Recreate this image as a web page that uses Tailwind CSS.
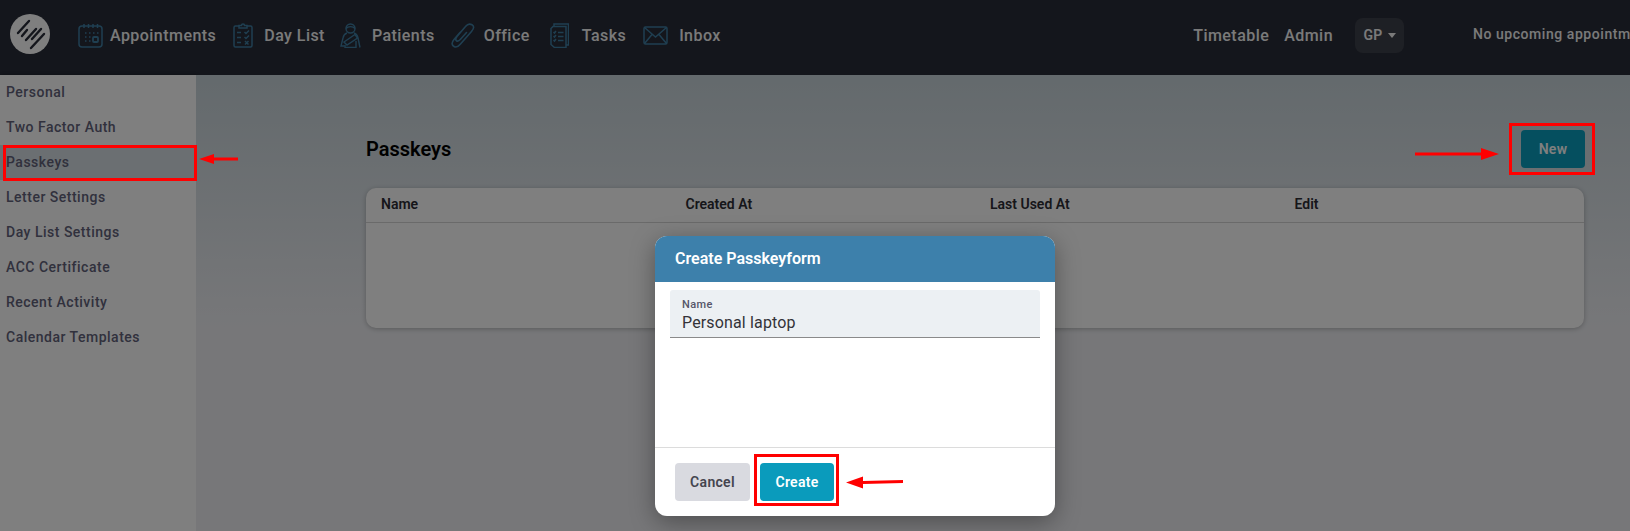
<!DOCTYPE html>
<html lang="en">
  <head>
    <meta charset="UTF-8" />
    <title>Passkeys</title>
    <script src="https://cdn.jsdelivr.net/npm/@tailwindcss/browser@4"></script>
  </head>
  <body class="bg-[#eeeff3]">
    <div class="relative w-[1630px] h-[531px] overflow-hidden font-['Roboto',sans-serif]">
      <!-- top nav -->
      <header class="h-[75px] pb-[4px] bg-[#282c38] flex items-center text-[#f5f5f5] text-[16px] font-medium tracking-[0.45px]">
        <div class="w-[40px] h-[40px] ml-[10px] -mt-[3px] rounded-full bg-white flex items-center justify-center">
          <svg width="32" height="32" viewBox="0 0 32 32" fill="none" stroke="#282c38" stroke-width="2.4" stroke-linecap="round">
            <path d="M4 15 L15 3" />
            <path d="M8 18 L13 12" />
            <path d="M12 22 L22 11" />
            <path d="M18 21 L27 11" />
            <path d="M17 30 L30 16" />
          </svg>
        </div>
        <nav class="flex items-center ml-[28px]">
          <svg class="w-[25px] h-[25px]" viewBox="0 0 25 25" fill="none" stroke="#3f7ea3" stroke-width="1.5">
            <rect x="1" y="3" width="23" height="21" rx="3" />
            <path d="M6 1v4M10.5 1v4M15 1v4M19.5 1v4" />
            <path d="M7 10h1.5M11 10h1.5M15 10h1.5M19 10h1.5M7 14h1.5M11 14h1.5M7 18h1.5M11 18h1.5" stroke-width="1.6" />
            <rect x="15" y="14" width="5" height="5" rx="1" stroke-width="1.8" />
          </svg>
          <span class="ml-[7px]">Appointments</span>
          <svg class="w-[20px] h-[25px] ml-[17px]" viewBox="0 0 20 25" fill="none" stroke="#3f7ea3" stroke-width="1.5">
            <path d="M6 3H2.500A1.500 1.500 0 0 0 1 4.500V22.500A1.500 1.500 0 0 0 2.500 24H17.500A1.500 1.500 0 0 0 19 22.500V4.500A1.500 1.500 0 0 0 17.500 3H14" />
            <path d="M6 5V2.500H8.500A1.500 1.500 0 0 1 11.500 2.500H14V5Z" />
            <path d="M4 9.500h4M4 14.500h4M4 19.500h4" />
            <path d="M11.500 9l1.500 1.500 3-3M11.500 14l1.500 1.500 3-3M12 18l3.500 3.500M15.500 18L12 21.500" />
          </svg>
          <span class="ml-[11px]">Day List</span>
          <svg class="w-[21px] h-[25px] ml-[15px]" viewBox="0 0 21 25" fill="none" stroke="#3f7ea3" stroke-width="1.4">
            <circle cx="10.500" cy="5.500" r="4.500" />
            <path d="M6 5.500C8 3 13 3 15 5.500" />
            <path d="M7 10C4 11 3.500 12.500 3 15L1 23H4.500M14 10C17 11 17.500 12.500 18 15L20 24.500" />
            <path d="M4 19L15 11.500L17.500 15L7 22Z" />
            <path d="M5 22V24.500H16V18" />
          </svg>
          <span class="ml-[11px]">Patients</span>
          <svg class="w-[24px] h-[25px] ml-[16px]" viewBox="0 0 24 25" fill="none" stroke="#3f7ea3" stroke-width="1.600" stroke-linecap="round">
            <path d="M9 9.500L3 16.500C0 20 1 22.500 3 23.500C5 24.500 7.500 23.500 9.500 21L20.500 8.500C23.500 5 23 3 21 1.800C19 .6 16.500 1 14.500 3.500L6 13.500C4.500 15.500 4.500 17 5.500 17.800C6.500 18.500 8 18 9.500 16.300L15.500 9.500" />
          </svg>
          <span class="ml-[9px]">Office</span>
          <svg class="w-[19px] h-[25px] ml-[20px]" viewBox="0 0 19 25" fill="none" stroke="#3f7ea3" stroke-width="1.500">
            <path d="M4 3V1H18.500V22H16" />
            <path d="M1 5.500L3 3.500H16V24.500H4.500L1 21.500Z" />
            <path d="M3.500 9l1 1 1.500-2M3.500 13l1 1 1.500-2M3.500 17l1 1 1.500-2M8 9.500h5.500M8 13.500h5.500M8 17.500h5.500" />
          </svg>
          <span class="ml-[13px]">Tasks</span>
          <svg class="w-[25px] h-[19px] ml-[17px]" viewBox="0 0 25 19" fill="none" stroke="#3f7ea3" stroke-width="1.500">
            <rect x="1" y="1" width="23" height="17" rx="1.500" />
            <path d="M1.500 1.500L12.500 11L23.500 1.500M1.500 17.500L9 8.500M23.500 17.500L16 8.500" />
          </svg>
          <span class="ml-[11px]">Inbox</span>
        </nav>
        <div class="ml-auto flex items-center">
          <span>Timetable</span>
          <span class="ml-[15px]">Admin</span>
          <div class="ml-[22px] w-[49px] h-[35px] rounded-[8px] bg-[#3d404a] flex items-center justify-center gap-[5px] text-[14px] font-semibold tracking-[0.3px]">
            GP
            <span class="w-0 h-0 border-x-[4.500px] border-x-transparent border-t-[5px] border-t-[#f5f5f5]"></span>
          </div>
          <div class="w-[226px] pl-[69px] overflow-hidden whitespace-nowrap text-[14px] tracking-[0.55px] -mt-[2px]">No upcoming appointments</div>
        </div>
      </header>

      <div class="flex h-[456px]">
        <!-- sidebar -->
        <aside class="w-[196px] shrink-0 bg-white shadow-[1px_0_3px_rgba(0,0,0,0.35)] text-[14px] font-medium text-[#62627a] tracking-[0.5px]">
          <div class="h-[35px] pl-[6px] flex items-center">Personal</div>
          <div class="h-[35px] pl-[6px] flex items-center">Two Factor Auth</div>
          <div class="h-[35px] pl-[6px] flex items-center bg-[#d6dfe4]">Passkeys</div>
          <div class="h-[35px] pl-[6px] flex items-center">Letter Settings</div>
          <div class="h-[35px] pl-[6px] flex items-center">Day List Settings</div>
          <div class="h-[35px] pl-[6px] flex items-center">ACC Certificate</div>
          <div class="h-[35px] pl-[6px] flex items-center">Recent Activity</div>
          <div class="h-[35px] pl-[6px] flex items-center">Calendar Templates</div>
        </aside>

        <!-- content -->
        <main class="flex-1 pl-[170px] pr-[46px] pt-[55px] bg-linear-to-b from-[#c8d4da] to-[#eeeff3] to-55%">
          <div class="flex items-center justify-between">
            <h1 class="text-[20px] font-semibold text-black">Passkeys</h1>
            <button class="w-[64px] h-[38px] -mr-[1px] rounded-[4px] bg-[#0a9fbf] text-white text-[14px] font-semibold tracking-[0.3px]">New</button>
          </div>
          <div class="mt-[20px] h-[140px] bg-white rounded-[10px] shadow-[0_1px_5px_rgba(0,0,0,0.25)]">
            <div class="h-[35px] pb-[2px] grid grid-cols-4 items-center border-b border-[#d4d4d4] text-[14px] font-semibold text-[#2d2d35]">
              <span class="pl-[15px]">Name</span>
              <span class="pl-[15px]">Created At</span>
              <span class="pl-[15px]">Last Used At</span>
              <span class="pl-[15px]">Edit</span>
            </div>
          </div>
        </main>
      </div>

      <!-- backdrop -->
      <div class="absolute inset-0 bg-black/50"></div>

      <!-- dialog -->
      <div class="absolute left-[655px] top-[236px] w-[400px] h-[280px] bg-white rounded-[12px] overflow-hidden shadow-[0_6px_24px_rgba(0,0,0,0.35)] flex flex-col">
        <div class="h-[46px] shrink-0 bg-[#3d80ab] pl-[20px] flex items-center text-white text-[16px] font-semibold">Create Passkeyform</div>
        <div class="flex-1 px-[15px] pt-[8px]">
          <div class="h-[48px] bg-[#ecf0f3] rounded-t-[3px] border-b border-[#8a8a8a] px-[12px] pt-[8px]">
            <div class="text-[11px] leading-[13px] text-[#555568] font-medium tracking-[0.4px]">Name</div>
            <div class="mt-[2px] text-[16px] leading-[20px] text-[#333338] tracking-[0.15px]">Personal laptop</div>
          </div>
        </div>
        <div class="h-[69px] shrink-0 border-t border-[#dcdcdc] pl-[20px] pt-[15px] flex items-start gap-[10px] text-[14px] font-semibold tracking-[0.3px]">
          <button class="w-[75px] h-[38px] rounded-[4px] bg-[#d9dae0] text-[#45454f]">Cancel</button>
          <button class="w-[74px] h-[38px] rounded-[4px] bg-[#0a9bbc] text-white">Create</button>
        </div>
      </div>

      <!-- red annotations -->
      <div class="absolute left-[3px] top-[145px] w-[194px] h-[36px] border-[3px] border-[#ff0000]"></div>
      <div class="absolute left-[1509px] top-[123px] w-[86px] h-[52px] border-[3px] border-[#ff0000]"></div>
      <div class="absolute left-[754px] top-[454px] w-[85px] h-[52px] border-[3px] border-[#ff0000]"></div>
      <svg class="absolute left-[198px] top-[152px]" width="42" height="14" viewBox="0 0 42 14" fill="#ff0000">
        <path d="M1 7L16 2V5.500H40V8.500H16V12Z" />
      </svg>
      <svg class="absolute left-[1414px] top-[147px]" width="86" height="14" viewBox="0 0 86 14" fill="#ff0000">
        <path d="M85 7L67 1V5.500H1V8.500H67V13Z" />
      </svg>
      <svg class="absolute left-[845px] top-[474px]" width="60" height="16" viewBox="0 0 60 16" fill="#ff0000">
        <path d="M1 8.500L18 2.500V7L58 6V9L18 10V14.500Z" />
      </svg>
    </div>
  </body>
</html>
